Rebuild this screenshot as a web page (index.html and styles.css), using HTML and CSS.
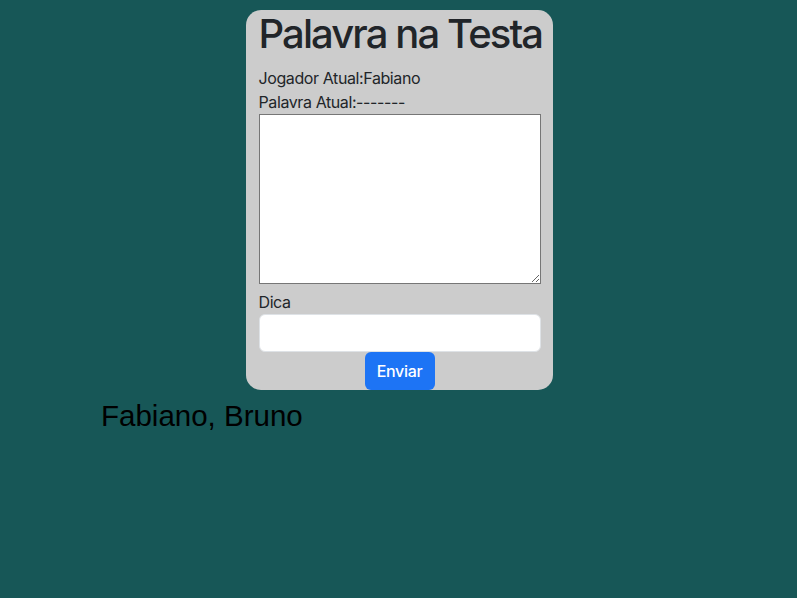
FILE: index.html
```html
<!DOCTYPE html>
<html lang="pt">
<head>
<meta charset="utf-8">
<title>Palavra na Testa</title>
<link rel="stylesheet" href="styles.css">
</head>
<body>
<main class="page">
  <section class="card">
    <h1 class="title">Palavra na Testa</h1>
    <div class="label">Jogador Atual:Fabiano</div>
    <div class="label">Palavra Atual:-------</div>
    <textarea class="area"></textarea>
    <div class="label">Dica</div>
    <input class="field" type="text">
    <div class="actions"><button class="btn">Enviar</button></div>
  </section>
  <div class="players">Fabiano, Bruno</div>
</main>
</body>
</html>
```
FILE: styles.css
```css
* { box-sizing: border-box; }
html, body { margin: 0; height: 100%; }
body {
  background: #175757;
  font-family: Inter, "Noto Sans", sans-serif;
  color: #212529;
  font-size: 16px;
  line-height: 1.5;
}
.page {
  display: flex;
  flex-direction: column;
  padding: 10px 0 0 1px;
}
.card {
  align-self: center;
  width: 307px;
  background: #cccccc;
  border-radius: 15px;
  padding: 0 12px 0 13px;
  display: flex;
  flex-direction: column;
}
.title {
  margin: 0 0 8px;
  font-size: 40px;
  font-weight: 550;
  line-height: 48px;
  letter-spacing: -1.9px;
  white-space: nowrap;
}
.label { height: 24px; letter-spacing: -0.4px; }
.area {
  width: 282px;
  height: 170px;
  margin: 0 0 6px;
  border: 1px solid #767676;
  background: #fff;
  resize: both;
}
.field {
  width: 282px;
  height: 38px;
  border: 1px solid #dee2e6;
  border-radius: 6px;
  background: #fff;
  padding: 6px 12px;
  font: inherit;
}
.actions { display: flex; justify-content: center; }
.btn {
  height: 38px;
  width: 70px;
  padding: 0;
  background: #1d74f5;
  color: #fff;
  border: 0;
  border-radius: 6px;
  font: inherit;
  font-weight: 500;
  letter-spacing: -0.3px;
}
.players {
  margin: 10px 0 0 100px;
  font-family: "Liberation Sans", Arial, sans-serif;
  font-size: 29.5px;
  line-height: 32px;
  color: #000;
}
```
